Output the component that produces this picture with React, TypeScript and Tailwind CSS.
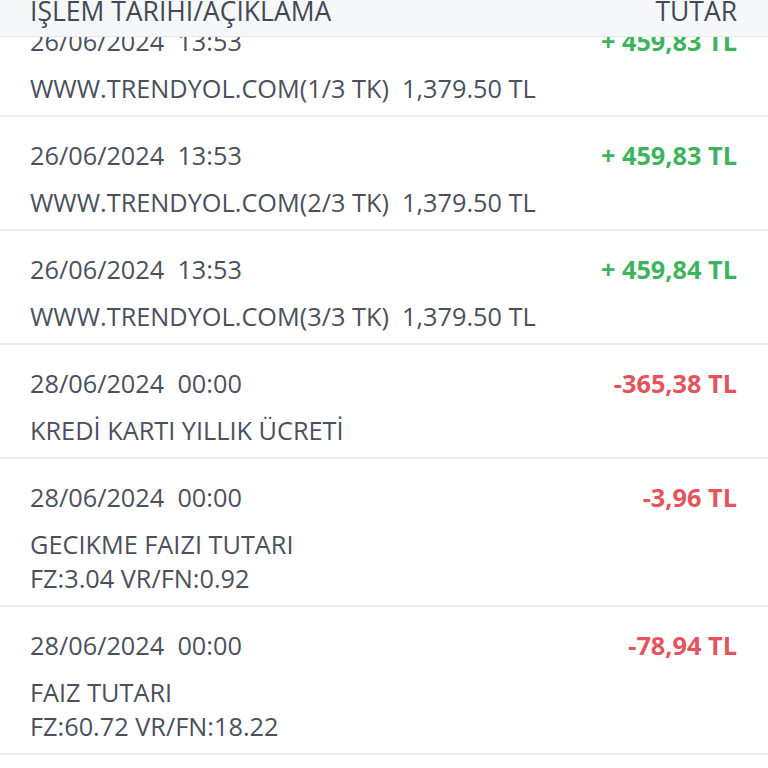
import React from "react";

type Row = { date: string; lines: string[]; amount: string; positive: boolean };

const rows: Row[] = [
  { date: "26/06/2024  13:53", lines: ["WWW.TRENDYOL.COM(1/3 TK)  1,379.50 TL"], amount: "+ 459,83 TL", positive: true },
  { date: "26/06/2024  13:53", lines: ["WWW.TRENDYOL.COM(2/3 TK)  1,379.50 TL"], amount: "+ 459,83 TL", positive: true },
  { date: "26/06/2024  13:53", lines: ["WWW.TRENDYOL.COM(3/3 TK)  1,379.50 TL"], amount: "+ 459,84 TL", positive: true },
  { date: "28/06/2024  00:00", lines: ["KREDİ KARTI YILLIK ÜCRETİ"], amount: "-365,38 TL", positive: false },
  { date: "28/06/2024  00:00", lines: ["GECIKME FAIZI TUTARI", "FZ:3.04 VR/FN:0.92"], amount: "-3,96 TL", positive: false },
  { date: "28/06/2024  00:00", lines: ["FAIZ TUTARI", "FZ:60.72 VR/FN:18.22"], amount: "-78,94 TL", positive: false },
];

export default function App() {
  return (
    <div
      className="relative h-[768px] w-[768px] overflow-hidden bg-white text-[#4b505d]"
      style={{ fontFamily: '"Open Sans", "Noto Sans", sans-serif' }}
    >
      <div className="absolute left-0 right-0 top-0 z-10 flex h-[37px] items-end justify-between border-b border-[#e6e7ea] bg-[#f6f7f9] pl-[30px] pr-[31px]">
        <span className="mb-[10px] text-[26.5px] leading-[30px] text-[#434855]">IŞLEM TARIHI/AÇIKLAMA</span>
        <span className="mb-[10px] text-[26.5px] leading-[30px] text-[#434855]">TUTAR</span>
      </div>
      <div className="mt-[3px] flex flex-col">
        {rows.map((r, i) => (
          <div key={i} className="flex justify-between border-b-2 border-[#ececee] pb-[10px] pl-[30px] pr-[31px] pt-[21px]">
            <div className="flex flex-col">
              <div className="whitespace-pre text-[25.3px] leading-[34px]">{r.date}</div>
              <div className="mt-[13px] flex flex-col">
                {r.lines.map((l, j) => (
                  <div key={j} className="whitespace-pre text-[25.3px] leading-[34px]">{l}</div>
                ))}
              </div>
            </div>
            <div
              className={`text-[25.3px] font-bold leading-[34px] ${r.positive ? "text-[#3db45c]" : "text-[#e5535c]"}`}
            >
              {r.amount}
            </div>
          </div>
        ))}
      </div>
    </div>
  );
}
